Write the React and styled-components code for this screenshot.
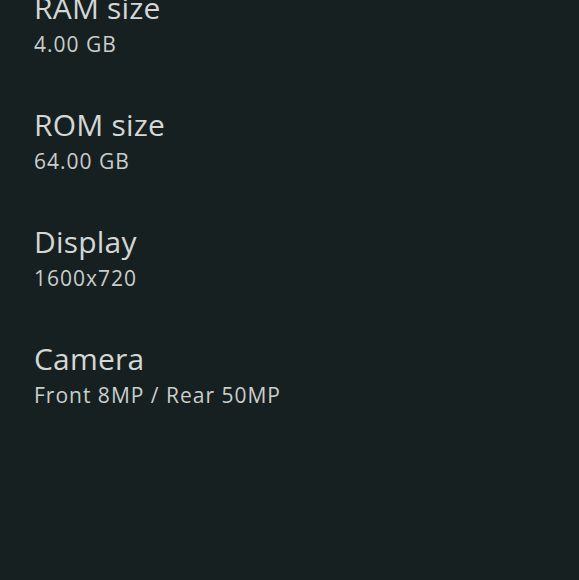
import React from "react";
import styled, { createGlobalStyle } from "styled-components";

const specs = [
  { label: "RAM size", value: "4.00 GB" },
  { label: "ROM size", value: "64.00 GB" },
  { label: "Display", value: "1600x720" },
  { label: "Camera", value: "Front 8MP / Rear 50MP" },
];

const GlobalStyle = createGlobalStyle`
  html, body {
    margin: 0;
    padding: 0;
    background: #172020;
  }
  body {
    font-family: "Open Sans", "Noto Sans", sans-serif;
    overflow: hidden;
  }
`;

const Screen = styled.div`
  width: 579px;
  height: 580px;
  background: #172020;
  overflow: hidden;
`;

const SpecList = styled.div`
  display: flex;
  flex-direction: column;
  gap: 49px;
  margin-top: -10px;
  padding-left: 34px;
`;

const SpecItem = styled.div`
  display: flex;
  flex-direction: column;
`;

const Label = styled.div`
  font-size: 30px;
  line-height: 36px;
  color: #d3d7d5;
  letter-spacing: 0.2px;
`;

const Value = styled.div`
  margin-top: 4px;
  font-size: 21px;
  line-height: 28px;
  color: #c9cecc;
  letter-spacing: 1px;
`;

const App = () => {
  return (
    <>
      <GlobalStyle />
      <Screen>
        <SpecList>
          {specs.map((spec) => (
            <SpecItem key={spec.label}>
              <Label>{spec.label}</Label>
              <Value>{spec.value}</Value>
            </SpecItem>
          ))}
        </SpecList>
      </Screen>
    </>
  );
};

export default App;
